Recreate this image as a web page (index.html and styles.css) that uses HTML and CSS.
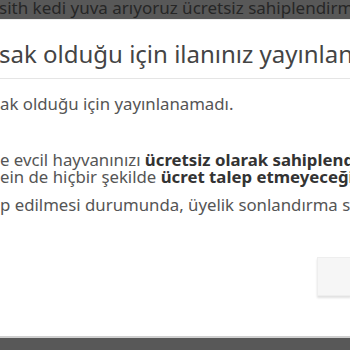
FILE: index.html
```html
<!DOCTYPE html>
<html lang="tr">
<head>
<meta charset="utf-8">
<link rel="stylesheet" href="styles.css">
</head>
<body>
<div class="backdrop-line">sith kedi yuva arıyoruz ücretsiz sahiplendirme</div>
<div class="modal">
  <div class="modal-header">
    <h4 class="modal-title">sak olduğu için ilanınız yayınlanamadı</h4>
  </div>
  <div class="modal-body">
    <p class="p-first">ak olduğu için yayınlanamadı.</p>
    <p>e evcil hayvanınızı <b>ücretsiz olarak sahiplendirmeniz</b><br>ein de hiçbir şekilde <b>ücret talep etmeyeceğinizi</b></p>
    <p>p edilmesi durumunda, üyelik sonlandırma süreci</p>
  </div>
  <div class="modal-footer">
    <button class="btn">Tamam</button>
  </div>
</div>
</body>
</html>
```
FILE: styles.css
```css
html, body {
  margin: 0;
  padding: 0;
  height: 100%;
  overflow: hidden;
}
body {
  background: #585858;
  font-family: "Noto Sans", Roboto, sans-serif;
  white-space: nowrap;
}
.backdrop-line {
  height: 19px;
  line-height: 15px;
  font-size: 17px;
  color: #262626;
  overflow: hidden;
  margin-left: -1px;
}
.modal {
  background: #fff;
  border-top: 1px solid #eee;
  border-bottom: 2px solid #cfcfcf;
  height: 316px;
  overflow: hidden;
}
.modal-header {
  height: 59px;
  border-bottom: 1px solid #e5e5e5;
  box-sizing: border-box;
  padding-top: 19px;
}
.modal-title {
  margin: 0;
  font-size: 24px;
  font-weight: 400;
  line-height: 30px;
  color: #444;
  margin-left: -1px;
}
.modal-body {
  padding-top: 16px;
  font-size: 16.8px;
  line-height: 17px;
  color: #555;
}
.modal-body p {
  margin: 0 0 11px;
}
.modal-body .p-first {
  margin-bottom: 39px;
}
.modal-body p:last-child {
  margin-bottom: 0;
}
.modal-body b {
  color: #333;
  font-weight: 700;
}
.modal-footer {
  display: flex;
  justify-content: flex-end;
  padding-top: 44px;
}
.btn {
  width: 34px;
  height: 39px;
  margin-right: -1px;
  background: #f6f6f6;
  border: 1px solid #eee;
  border-right: none;
  box-shadow: 0 2px 2px rgba(0,0,0,0.12);
  color: transparent;
  font-size: 1px;
  padding: 0;
}
```
